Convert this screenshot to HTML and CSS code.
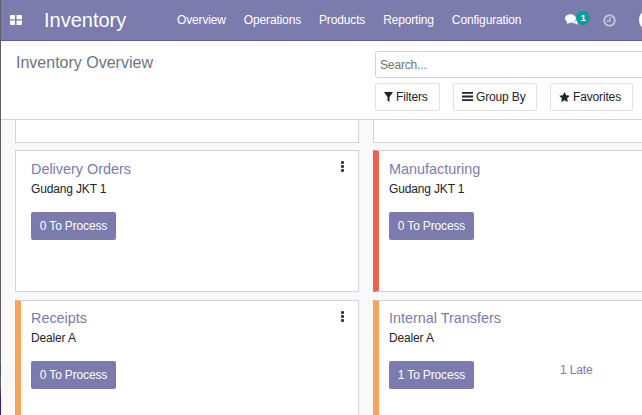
FILE: index.html
```html
<!DOCTYPE html>
<html lang="en">
<head>
<meta charset="utf-8">
<title>Inventory Overview</title>
<link rel="stylesheet" href="styles.css">
</head>
<body>
<div class="app">
  <header class="navbar">
    <svg class="apps" width="12" height="10" viewBox="0 0 12 10"><path d="M0 1a1 1 0 0 1 1-1h4v4.300H0zM6.500 0H11a1 1 0 0 1 1 1v3.300H6.500zM0 5.500h5V10H1a1 1 0 0 1-1-1zM6.500 5.500H12V9a1 1 0 0 1-1 1H6.500z" fill="#fff"/></svg>
    <span class="brand">Inventory</span>
    <nav class="menu">
      <span>Overview</span><span>Operations</span><span>Products</span><span>Reporting</span><span>Configuration</span>
    </nav>
    <div class="systray">
      <span class="chat">
        <svg width="14" height="12" viewBox="0 0 14 12"><ellipse cx="5.500" cy="4.500" rx="5.500" ry="4.200" fill="#fff"/><path d="M3 7l-1.500 3L6 8.500z" fill="#fff"/><path d="M11.500 3c1.800.8 2.700 2 2.400 3.500-.2 1-.9 1.600-1.500 2l.7 2.500-3-1.700c-1.200.2-2.500 0-3.400-.6 2.800 0 5-2.500 4.800-5.700z" fill="#fff"/></svg>
        <span class="badge">1</span>
      </span>
      <svg class="clock" width="13" height="13" viewBox="0 0 14 14"><circle cx="7" cy="7" r="5.700" fill="none" stroke="#c5c2d8" stroke-width="2"/><path d="M7.500 3.500v4H4" fill="none" stroke="#c5c2d8" stroke-width="1.500"/></svg>
      <span class="avatar"></span>
    </div>
  </header>
  <section class="panel">
    <h1 class="crumb">Inventory Overview</h1>
    <div class="tools">
      <div class="search">Search...</div>
      <div class="buttons">
        <span class="tool filters"><svg width="9" height="10" viewBox="0 0 9 10"><path d="M0 0h9L5.500 5v5L3.500 8.500V5z" fill="#212529"/></svg>Filters</span>
        <span class="tool group"><svg width="11" height="9" viewBox="0 0 11 9"><path d="M0 0h11v1.800H0zM0 3.600h11v1.800H0zM0 7.200h11V9H0z" fill="#212529"/></svg>Group By</span>
        <span class="tool favs"><svg width="11" height="10" viewBox="0 0 12 11"><path d="M6 0l1.800 3.700 4.100.5-3 2.800.8 4L6 9 2.300 11l.8-4-3-2.800 4.100-.5z" fill="#212529"/></svg>Favorites</span>
      </div>
    </div>
  </section>
  <main class="board">
    <article class="card stub"></article>
    <article class="card stub"></article>

    <article class="card tall">
      <h2>Delivery Orders</h2>
      <p>Gudang JKT 1</p>
      <span class="btn">0 To Process</span>
      <span class="kebab"><i></i><i></i><i></i></span>
    </article>
    <article class="card tall red">
      <h2>Manufacturing</h2>
      <p>Gudang JKT 1</p>
      <span class="btn">0 To Process</span>
    </article>

    <article class="card orange">
      <h2>Receipts</h2>
      <p>Dealer A</p>
      <span class="btn">0 To Process</span>
      <span class="kebab"><i></i><i></i><i></i></span>
    </article>
    <article class="card orange">
      <h2>Internal Transfers</h2>
      <p>Dealer A</p>
      <div class="row">
        <span class="btn">1 To Process</span>
        <span class="late">1 Late</span>
      </div>
    </article>
  </main>
</div>
</body>
</html>
```
FILE: styles.css
```css
* { box-sizing: border-box; }
html, body { margin: 0; height: 100%; overflow: hidden; }
body {
  width: 642px;
  height: 415px;
  font-family: "Liberation Sans", Arial, sans-serif;
  font-size: 12px;
  letter-spacing: -0.15px;
  color: #212529;
  background: #fff;
}
.app {
  height: 415px;
  border-left: 1px solid #5f5f5f;
  border-image: linear-gradient(#5f5f5f 0, #5f5f5f 88%, #2a4a7a 88%, #6a6a6a 92%, #2d1f7a 96%, #2d1f7a 100%) 1;
  overflow: hidden;
}
.navbar {
  height: 41px;
  display: flex;
  align-items: center;
  background: #7c7bad;
  border-bottom: 1px solid #5f5e97;
  color: #fff;
  padding-left: 9px;
  white-space: nowrap;
}
.apps { flex: none; }
.brand {
  font-size: 20px;
  letter-spacing: 0;
  margin-left: 22px;
  width: 133px;
  flex: none;
}
.menu {
  display: flex;
  gap: 18px;
  flex: none;
  padding-bottom: 1px;
}
.systray {
  display: flex;
  align-items: center;
  margin-left: 44px;
}
.chat {
  position: relative;
  width: 14px;
  height: 12px;
  display: block;
}
.chat svg { display: block; }
.badge {
  position: absolute;
  left: 11px;
  top: -3px;
  width: 14px;
  height: 14px;
  border-radius: 50%;
  background: #00a09d;
  font-size: 9px;
  font-weight: 700;
  letter-spacing: 0;
  line-height: 14px;
  text-align: center;
}
.clock { margin-left: 24px; flex: none; }
.avatar {
  width: 24px;
  height: 24px;
  border-radius: 50%;
  background: #fff;
  margin-left: 23px;
  flex: none;
}
.panel {
  height: 79px;
  background: #fff;
  border-bottom: 1px solid #ced4da;
  display: flex;
  justify-content: space-between;
  padding-left: 15px;
}
.crumb {
  margin: 13px 0 0;
  font-size: 16px;
  font-weight: 400;
  letter-spacing: 0;
  color: #6c757d;
  line-height: 18px;
}
.tools {
  width: 267px;
  flex: none;
  padding-top: 10px;
}
.search {
  width: 300px;
  height: 27px;
  border: 1px solid #ced4da;
  border-radius: 3px;
  padding-left: 4px;
  line-height: 26px;
  color: #6c757d;
}
.buttons {
  display: flex;
  margin-top: 5px;
}
.tool {
  height: 28px;
  display: flex;
  align-items: center;
  gap: 3px;
  padding: 0 0 1px 8px;
  border: 1px solid #dee2e6;
  border-radius: 2px;
  flex: none;
}
.filters { width: 65px; }
.group { width: 84px; margin-left: 13px; }
.favs { width: 83px; margin-left: 13px; }
.board {
  height: 295px;
  background: #f9f9f9;
  display: grid;
  grid-template-columns: 344px 344px;
  grid-template-rows: 23px 143px 142px;
  column-gap: 14px;
  row-gap: 7px;
  padding-left: 14px;
}
.card {
  position: relative;
  background: #fff;
  border: 1px solid #ced4da;
  padding: 10px 15px;
}
.stub { border-top: 0; }
.tall { height: 142px; }
.red { border-left: 6px solid #f0604f; padding-left: 10px; }
.orange { border-left: 6px solid #f4a460; padding: 9px 15px 0 10px; }
h2 {
  margin: 0;
  font-size: 14.400px;
  font-weight: 400;
  letter-spacing: 0;
  line-height: 17px;
  color: #7c7bad;
}
p {
  margin: 4px 0 0;
  line-height: 14px;
}
.btn {
  display: block;
  width: 85px;
  height: 28px;
  margin-top: 16px;
  border-radius: 2px;
  background: #7c7bad;
  color: #fff;
  line-height: 28px;
  text-align: center;
}
.row {
  display: flex;
  align-items: flex-start;
}
.late {
  margin: 18px 0 0 86px;
  color: #7c7bad;
}
.kebab {
  position: absolute;
  right: 14px;
  top: 10px;
  display: flex;
  flex-direction: column;
  gap: 1px;
}
.kebab i {
  width: 3px;
  height: 3px;
  border-radius: 1px;
  background: #343a40;
}
```
